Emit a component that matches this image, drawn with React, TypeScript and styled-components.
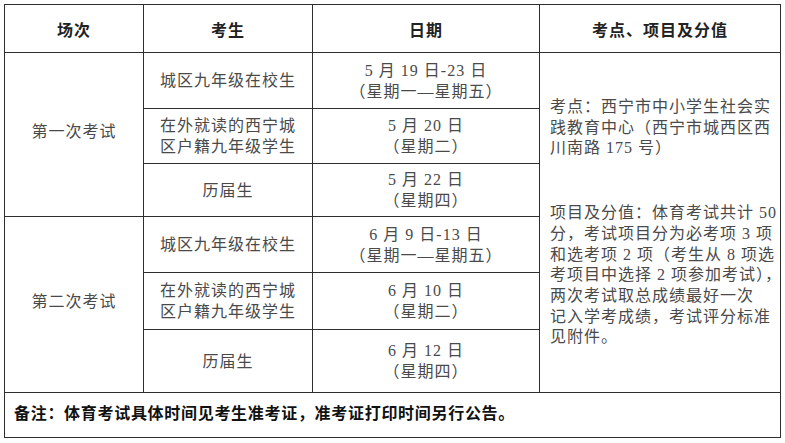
import React from 'react';
import styled, { createGlobalStyle } from 'styled-components';

const GlobalStyle = createGlobalStyle`
  html, body {
    margin: 0;
    padding: 0;
    background: #ffffff;
  }
  body {
    font-family: "Liberation Serif", "Noto Sans CJK SC", serif;
  }
`;

type Session = {
  title: string;
  rows: { students: string[]; date: string; weekday: string; height: number }[];
};

const sessions: Session[] = [
  {
    title: '第一次考试',
    rows: [
      { students: ['城区九年级在校生'], date: '5 月 19 日-23 日', weekday: '（星期一—星期五）', height: 56 },
      { students: ['在外就读的西宁城', '区户籍九年级学生'], date: '5 月 20 日', weekday: '（星期二）', height: 55 },
      { students: ['历届生'], date: '5 月 22 日', weekday: '（星期四）', height: 53 },
    ],
  },
  {
    title: '第二次考试',
    rows: [
      { students: ['城区九年级在校生'], date: '6 月 9 日-13 日', weekday: '（星期一—星期五）', height: 56 },
      { students: ['在外就读的西宁城', '区户籍九年级学生'], date: '6 月 10 日', weekday: '（星期二）', height: 57 },
      { students: ['历届生'], date: '6 月 12 日', weekday: '（星期四）', height: 63 },
    ],
  },
];

const venueLines = ['考点：西宁市中小学生社会实', '践教育中心（西宁市城西区西', '川南路 175 号）'];

const scoreLines = [
  '项目及分值：体育考试共计 50',
  '分，考试项目分为必考项 3 项',
  '和选考项 2 项（考生从 8 项选',
  '考项目中选择 2 项参加考试），',
  '两次考试取总成绩最好一次',
  '记入学考成绩，考试评分标准',
  '见附件。',
];

export default function App() {
  return (
    <Page>
      <GlobalStyle />
      <Table>
        <colgroup>
          <col style={{ width: 139 }} />
          <col style={{ width: 169 }} />
          <col style={{ width: 227 }} />
          <col style={{ width: 241 }} />
        </colgroup>
        <thead>
          <Row $height={48}>
            <HeadCell>场次</HeadCell>
            <HeadCell>考生</HeadCell>
            <HeadCell>日期</HeadCell>
            <HeadCell>考点、项目及分值</HeadCell>
          </Row>
        </thead>
        <tbody>
          {sessions.map((session, si) =>
            session.rows.map((row, ri) => (
              <Row key={`${si}-${ri}`} $height={row.height}>
                {ri === 0 && (
                  <SessionCell rowSpan={session.rows.length}>{session.title}</SessionCell>
                )}
                <Cell>
                  <Lines>
                    {row.students.map(line => (
                      <Line key={line}>{line}</Line>
                    ))}
                  </Lines>
                </Cell>
                <Cell>
                  <Line>{row.date}</Line>
                  <Line>{row.weekday}</Line>
                </Cell>
                {si === 0 && ri === 0 && (
                  <InfoCell rowSpan={6}>
                    <Paragraph>
                      {venueLines.map(line => (
                        <Line key={line}>{line}</Line>
                      ))}
                    </Paragraph>
                    <Paragraph>
                      {scoreLines.map(line => (
                        <Line key={line}>{line}</Line>
                      ))}
                    </Paragraph>
                  </InfoCell>
                )}
              </Row>
            )),
          )}
          <Row $height={45}>
            <NoteCell colSpan={4}>
              备注：体育考试具体时间见考生准考证，准考证打印时间另行公告。
            </NoteCell>
          </Row>
        </tbody>
      </Table>
    </Page>
  );
}

const Page = styled.div`
  padding: 4px 0 0 4px;
`;

const Table = styled.table`
  border-collapse: collapse;
  table-layout: fixed;
  width: 777px;
  color: #4a4a4a;
  font-size: 16px;
  letter-spacing: 1px;
`;

const Row = styled.tr<{ $height: number }>`
  height: ${({ $height }) => $height}px;
`;

const Cell = styled.td`
  border: 1px solid #2e2e2e;
  padding: 0;
  text-align: center;
  vertical-align: middle;
  line-height: 21px;
`;

const HeadCell = styled.th`
  border: 1px solid #2e2e2e;
  padding: 0;
  text-align: center;
  vertical-align: middle;
  font-weight: 700;
  color: #222;
  font-size: 16px;
`;

const SessionCell = styled(Cell)`
  padding-bottom: 6px;
`;

const Lines = styled.div`
  display: inline-block;
  text-align: left;
`;

const Line = styled.div`
  white-space: nowrap;
`;

const InfoCell = styled(Cell)`
  text-align: left;
  padding: 0 6px 0 10px;
  line-height: 20.7px;
  letter-spacing: 1px;
`;

const Paragraph = styled.div`
  & + & {
    margin-top: 44px;
  }
`;

const NoteCell = styled(Cell)`
  text-align: left;
  padding: 0 0 4px 9px;
  font-weight: 700;
  color: #111;
  letter-spacing: 0.7px;
`;
